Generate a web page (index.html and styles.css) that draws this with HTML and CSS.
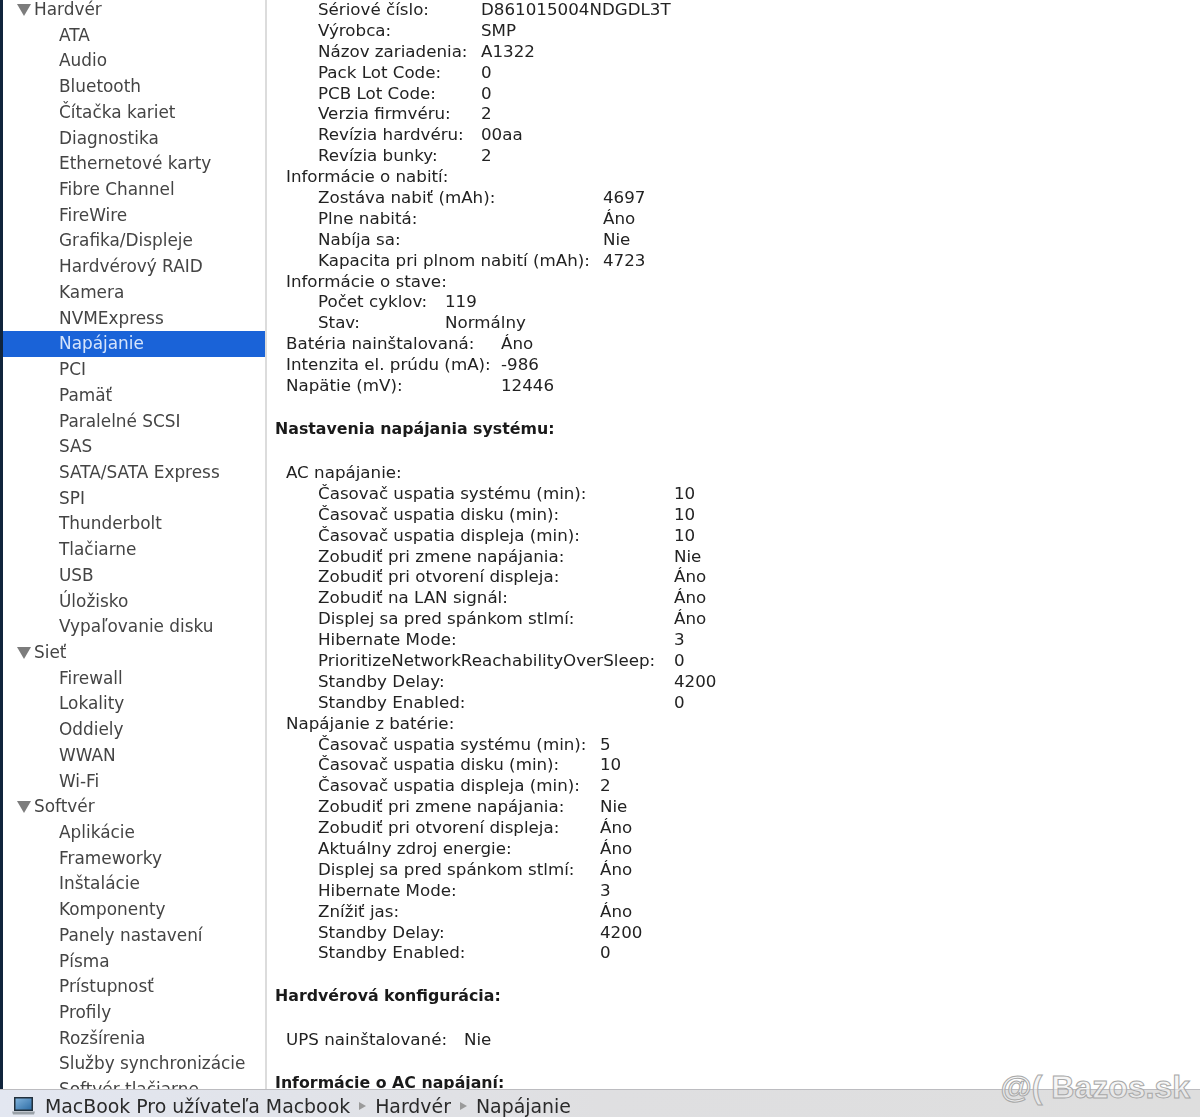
FILE: index.html
```html
<!DOCTYPE html>
<html lang="sk">
<head>
  <meta charset="UTF-8" />
  <title>Napájanie</title>
  <link rel="stylesheet" href="styles.css">
</head>
<body>
  <div class="app">
    <div class="panes">
      <ul class="sidebar">
        <li class="group"><span class="arrow"></span>Hardvér</li>
        <li>ATA</li>
        <li>Audio</li>
        <li>Bluetooth</li>
        <li>Čítačka kariet</li>
        <li>Diagnostika</li>
        <li>Ethernetové karty</li>
        <li>Fibre Channel</li>
        <li>FireWire</li>
        <li>Grafika/Displeje</li>
        <li>Hardvérový RAID</li>
        <li>Kamera</li>
        <li>NVMExpress</li>
        <li class="selected">Napájanie</li>
        <li>PCI</li>
        <li>Pamäť</li>
        <li>Paralelné SCSI</li>
        <li>SAS</li>
        <li>SATA/SATA Express</li>
        <li>SPI</li>
        <li>Thunderbolt</li>
        <li>Tlačiarne</li>
        <li>USB</li>
        <li>Úložisko</li>
        <li>Vypaľovanie disku</li>
        <li class="group"><span class="arrow"></span>Sieť</li>
        <li>Firewall</li>
        <li>Lokality</li>
        <li>Oddiely</li>
        <li>WWAN</li>
        <li>Wi-Fi</li>
        <li class="group"><span class="arrow"></span>Softvér</li>
        <li>Aplikácie</li>
        <li>Frameworky</li>
        <li>Inštalácie</li>
        <li>Komponenty</li>
        <li>Panely nastavení</li>
        <li>Písma</li>
        <li>Prístupnosť</li>
        <li>Profily</li>
        <li>Rozšírenia</li>
        <li>Služby synchronizácie</li>
        <li>Softvér tlačiarne</li>
      </ul>

      <div class="detail">
        <div class="rows in2 w163">
          <div class="row"><span>Sériové číslo:</span><span>D861015004NDGDL3T</span></div>
          <div class="row"><span>Výrobca:</span><span>SMP</span></div>
          <div class="row"><span>Názov zariadenia:</span><span>A1322</span></div>
          <div class="row"><span>Pack Lot Code:</span><span>0</span></div>
          <div class="row"><span>PCB Lot Code:</span><span>0</span></div>
          <div class="row"><span>Verzia firmvéru:</span><span>2</span></div>
          <div class="row"><span>Revízia hardvéru:</span><span>00aa</span></div>
          <div class="row"><span>Revízia bunky:</span><span>2</span></div>
        </div>
        <div class="row in1">Informácie o nabití:</div>
        <div class="rows in2 w285">
          <div class="row"><span>Zostáva nabiť (mAh):</span><span>4697</span></div>
          <div class="row"><span>Plne nabitá:</span><span>Áno</span></div>
          <div class="row"><span>Nabíja sa:</span><span>Nie</span></div>
          <div class="row"><span>Kapacita pri plnom nabití (mAh):</span><span>4723</span></div>
        </div>
        <div class="row in1">Informácie o stave:</div>
        <div class="rows in2 w127">
          <div class="row"><span>Počet cyklov:</span><span>119</span></div>
          <div class="row"><span>Stav:</span><span>Normálny</span></div>
        </div>
        <div class="rows in1 w215">
          <div class="row"><span>Batéria nainštalovaná:</span><span>Áno</span></div>
          <div class="row"><span>Intenzita el. prúdu (mA):</span><span>-986</span></div>
          <div class="row"><span>Napätie (mV):</span><span>12446</span></div>
        </div>

        <h3 class="heading">Nastavenia napájania systému:</h3>

        <div class="row in1">AC napájanie:</div>
        <div class="rows in2 w356">
          <div class="row"><span>Časovač uspatia systému (min):</span><span>10</span></div>
          <div class="row"><span>Časovač uspatia disku (min):</span><span>10</span></div>
          <div class="row"><span>Časovač uspatia displeja (min):</span><span>10</span></div>
          <div class="row"><span>Zobudiť pri zmene napájania:</span><span>Nie</span></div>
          <div class="row"><span>Zobudiť pri otvorení displeja:</span><span>Áno</span></div>
          <div class="row"><span>Zobudiť na LAN signál:</span><span>Áno</span></div>
          <div class="row"><span>Displej sa pred spánkom stlmí:</span><span>Áno</span></div>
          <div class="row"><span>Hibernate Mode:</span><span>3</span></div>
          <div class="row"><span>PrioritizeNetworkReachabilityOverSleep:</span><span>0</span></div>
          <div class="row"><span>Standby Delay:</span><span>4200</span></div>
          <div class="row"><span>Standby Enabled:</span><span>0</span></div>
        </div>
        <div class="row in1">Napájanie z batérie:</div>
        <div class="rows in2 w282">
          <div class="row"><span>Časovač uspatia systému (min):</span><span>5</span></div>
          <div class="row"><span>Časovač uspatia disku (min):</span><span>10</span></div>
          <div class="row"><span>Časovač uspatia displeja (min):</span><span>2</span></div>
          <div class="row"><span>Zobudiť pri zmene napájania:</span><span>Nie</span></div>
          <div class="row"><span>Zobudiť pri otvorení displeja:</span><span>Áno</span></div>
          <div class="row"><span>Aktuálny zdroj energie:</span><span>Áno</span></div>
          <div class="row"><span>Displej sa pred spánkom stlmí:</span><span>Áno</span></div>
          <div class="row"><span>Hibernate Mode:</span><span>3</span></div>
          <div class="row"><span>Znížiť jas:</span><span>Áno</span></div>
          <div class="row"><span>Standby Delay:</span><span>4200</span></div>
          <div class="row"><span>Standby Enabled:</span><span>0</span></div>
        </div>

        <h3 class="heading">Hardvérová konfigurácia:</h3>

        <div class="rows in1 w178">
          <div class="row"><span>UPS nainštalované:</span><span>Nie</span></div>
        </div>

        <h3 class="heading">Informácie o AC napájaní:</h3>
      </div>
    </div>

    <div class="pathbar">
      <svg class="laptop" width="23" height="19" viewBox="0 0 23 19">
        <defs>
          <linearGradient id="screen" x1="0" y1="0" x2="1" y2="1">
            <stop offset="0" stop-color="#7fb2dc" />
            <stop offset="1" stop-color="#2f6ea6" />
          </linearGradient>
        </defs>
        <rect x="2" y="1" width="19" height="14" fill="#22303c" />
        <rect x="3.5" y="2.5" width="16" height="11" fill="url(#screen)" />
        <path d="M0 15.5h23l-1 3h-21z" fill="#9aa1a8" />
      </svg>
      <span>MacBook Pro užívateľa Macbook</span>
      <span class="sep"></span>
      <span>Hardvér</span>
      <span class="sep"></span>
      <span>Napájanie</span>
    </div>
  </div>

  <div class="watermark">@( Bazos.sk</div>
</body>
</html>
```
FILE: styles.css
```css
* {
  box-sizing: border-box;
}

html, body {
  margin: 0;
  padding: 0;
}

body {
  width: 1200px;
  height: 1117px;
  overflow: hidden;
  position: relative;
  background: #fff;
  font-family: 'DejaVu Sans', 'Liberation Sans', sans-serif;
  font-size: 16.7px;
  color: #222;
}

.app {
  height: 1117px;
  display: flex;
  flex-direction: column;
  filter: blur(0.45px);
}

.panes {
  height: 1089px;
  display: flex;
  overflow: hidden;
  border-left: 3px solid #10243c;
}

/* sidebar */
.sidebar {
  width: 264px;
  flex: none;
  margin: -3px 0 0;
  padding: 0;
  list-style: none;
  border-right: 2px solid #dcdcdc;
  font-size: 16.9px;
  color: #444;
}

.sidebar li {
  height: 25.72px;
  line-height: 25.72px;
  padding-left: 56px;
  white-space: nowrap;
}

.sidebar .group {
  display: flex;
  align-items: center;
  padding-left: 14px;
}

.arrow {
  width: 0;
  height: 0;
  margin-right: 3px;
  border-left: 7px solid transparent;
  border-right: 7px solid transparent;
  border-top: 12px solid #7c7c7c;
}

.sidebar .selected {
  background: #1a63d8;
  color: #d5e4fb;
}

/* detail pane */
.detail {
  flex: 1;
  margin-top: -1px;
  padding-left: 8px;
}

.row {
  height: 20.9px;
  line-height: 20.9px;
  display: flex;
  white-space: nowrap;
}

.rows .row span:first-child {
  flex: none;
}

.in1 {
  padding-left: 11px;
}

.in2 {
  padding-left: 43px;
}

.w127 span:first-child { width: 127px; }
.w163 span:first-child { width: 163px; }
.w178 span:first-child { width: 178px; }
.w215 span:first-child { width: 215px; }
.w282 span:first-child { width: 282px; }
.w285 span:first-child { width: 285px; }
.w356 span:first-child { width: 356px; }

.heading {
  height: 20.9px;
  line-height: 20.9px;
  margin: 22.6px 0;
  font-size: 15.8px;
  font-weight: 700;
  color: #1a1a1a;
  white-space: nowrap;
}

/* bottom path bar */
.pathbar {
  height: 28px;
  flex: none;
  display: flex;
  align-items: center;
  gap: 9px;
  padding: 4px 0 0 12px;
  background: linear-gradient(to right, #e3e7f1, #dfdfe1 50%, #dedede);
  border-top: 1px solid #bcbcc0;
  font-size: 18.9px;
  color: #2a2a2a;
  white-space: nowrap;
}

.laptop {
  flex: none;
  margin-right: 1px;
}

.sep {
  width: 0;
  height: 0;
  border-top: 4px solid transparent;
  border-bottom: 4px solid transparent;
  border-left: 7px solid #9a9a9a;
}

/* site watermark, sits over the page */
.watermark {
  position: absolute;
  right: 10px;
  top: 1067px;
  font-family: 'Liberation Sans', sans-serif;
  font-size: 32px;
  font-weight: 700;
  line-height: 40px;
  color: rgba(240, 240, 240, 0.6);
  -webkit-text-stroke: 1px #a8a8a8;
  white-space: nowrap;
}
```
